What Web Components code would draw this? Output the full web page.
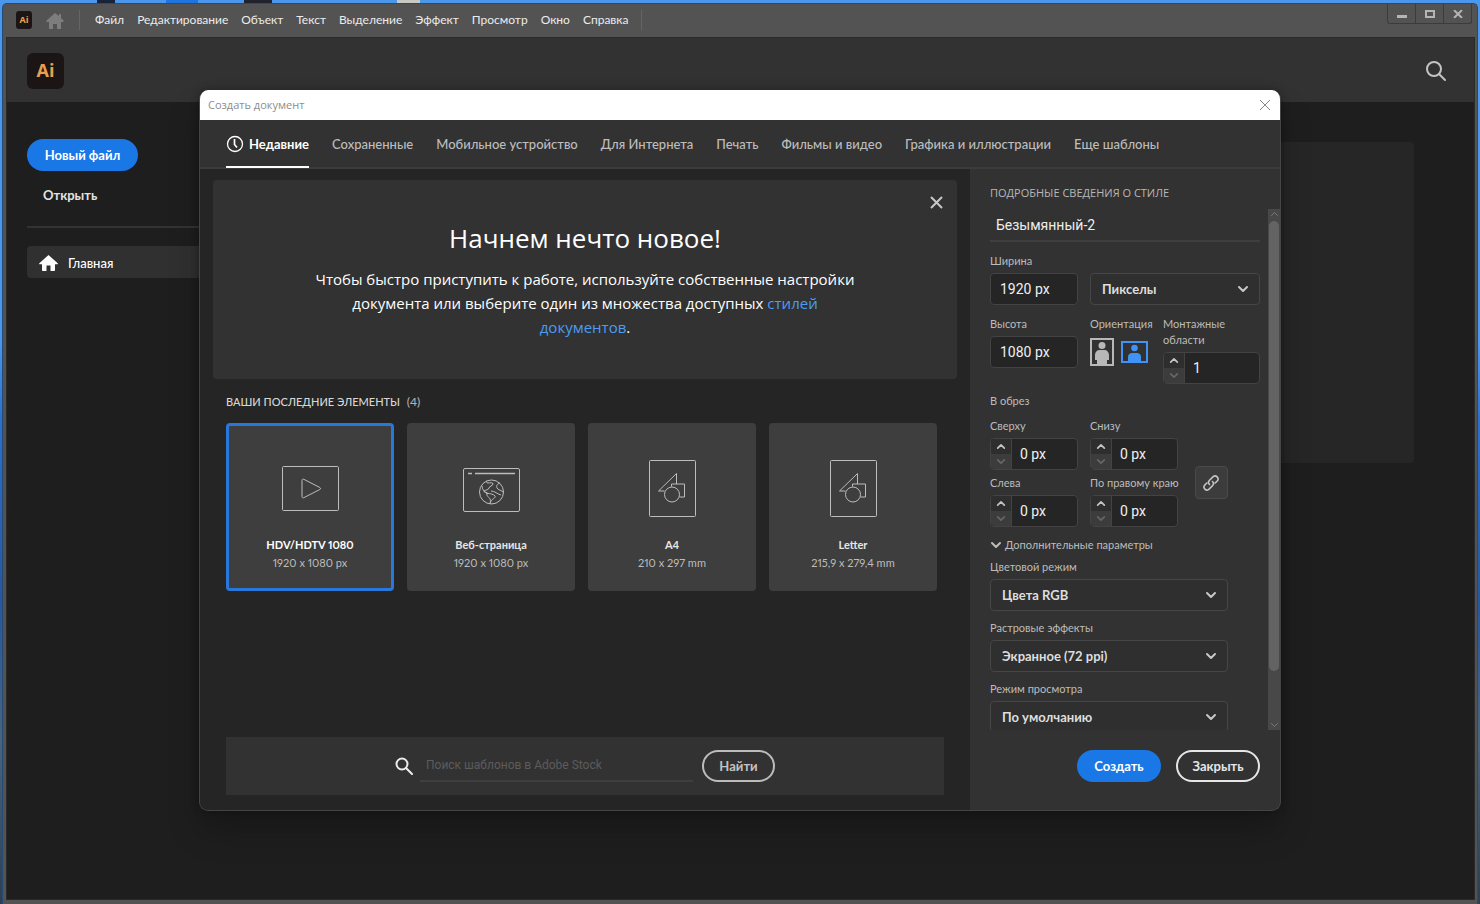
<!DOCTYPE html>
<html lang="ru">
<head>
<meta charset="utf-8">
<title>Создать документ</title>
<style>
html,body{margin:0;height:100%}
body{font-family:Lato,"Open Sans",sans-serif;font-size:13px;line-height:16px;color:#e3e3e3;background:#1e1e1e;overflow:hidden}
</style>
</head>
<body>
<ai-desktop>
  <ai-window>
    <ai-menubar slot="menu"></ai-menubar>
    <ai-home-header slot="header"></ai-home-header>
    <ai-home slot="body"></ai-home>
  </ai-window>
  <ai-dialog slot="dialog" heading="Создать документ">
    <ai-tabs slot="tabs"></ai-tabs>
    <ai-recent slot="main">
      <ai-banner slot="banner"></ai-banner>
      <ai-preset name="HDV/HDTV 1080" size="1920 x 1080 px" icon="video" selected></ai-preset>
      <ai-preset name="Веб-страница" size="1920 x 1080 px" icon="web"></ai-preset>
      <ai-preset name="A4" size="210 x 297 mm" icon="print"></ai-preset>
      <ai-preset name="Letter" size="215,9 x 279,4 mm" icon="print"></ai-preset>
      <ai-stock-search slot="search"></ai-stock-search>
    </ai-recent>
    <ai-details slot="details"></ai-details>
  </ai-dialog>
</ai-desktop>

<script>
const define = (name, html, after) => customElements.define(name, class extends HTMLElement {
  connectedCallback() {
    if (this.shadowRoot) return;
    const root = this.attachShadow({mode: 'open'});
    const t = document.createElement('template');
    t.innerHTML = `<style>:host,*{box-sizing:border-box}button,input,select{font:inherit;color:inherit;margin:0}button{border:0;background:none;padding:0}svg{display:block;flex:none}</style>` +
      (typeof html === 'function' ? html(this) : html);
    root.append(t.content.cloneNode(true));
    if (after) after(root, this);
  }
});
const chevron = (w, h, sw, up) => `<svg width="${w}" height="${h}" viewBox="0 0 12 8" fill="none" stroke="currentColor" stroke-width="${sw}" stroke-linecap="round" stroke-linejoin="round" aria-hidden="true"><path d="${up ? 'M2 6l4-4 4 4' : 'M2 2l4 4 4-4'}"/></svg>`;

/* ---------- desktop behind the window ---------- */
define('ai-desktop', `
<style>
:host{display:flex;flex-direction:column;height:100%;position:relative;overflow:hidden;background:#4a97ec;padding:3px 2px 0 2px;
 background-image:
  linear-gradient(90deg,transparent 97px,#16233a 97px 115px,transparent 115px 166px,#1f74e0 166px 198px,transparent 198px 244px,#20222e 244px 272px,transparent 272px 397px,#c9c9c4 397px 420px,transparent 420px),
  linear-gradient(#4a97ec 0 340px,#2c70cc 420px,#27579e 600px,#48647f 740px,#2d3f50 100%);
 background-size:100% 3px,100% 100%;background-repeat:no-repeat}
.layer{position:absolute;inset:0;display:flex;padding:90px 199px 93px}
</style>
<slot></slot>
<div class="layer"><slot name="dialog"></slot></div>`);

/* ---------- application window ---------- */
define('ai-window', `
<style>
:host{display:flex;flex-direction:column;flex:1;min-height:0;background:#535353;border:1px solid #274a72;border-bottom:0;border-radius:5px 5px 0 0;padding:0 2px 4px 3px}
.in{flex:1;min-height:0;display:flex;flex-direction:column;border:1px solid #2a2a2a;background:#1e1e1e}
</style>
<slot name="menu"></slot>
<div class="in"><slot name="header"></slot><slot name="body"></slot></div>`);

define('ai-menubar', `
<style>
:host{display:flex;height:33px;align-items:center;color:#ececec;font-size:12px;padding:0 0 1px 10px}
.logo{width:16px;height:18px;border-radius:3px;background:#1c1516;color:#f2a14b;font:700 9px/18px "Open Sans",sans-serif;text-align:center}
.home{color:#7d7d7d;margin:1px 15px 0 14px}
.sep{width:1px;height:20px;background:#656565}
nav{display:flex;gap:13px;margin:0 13px 0 15px}
.win{margin:0 3px 0 auto;align-self:flex-start;display:flex;border:1px solid #3c3c3c;border-top:0;border-radius:0 0 3px 3px;color:#b5b5b5}
.win button{width:27px;height:19px;display:grid;place-items:center}
.win button+button{border-left:1px solid #3c3c3c;width:28px}
</style>
<span class="logo">Ai</span>
<svg class="home" width="18" height="16" viewBox="0 0 18 16" fill="currentColor"><path d="M9 0L0 8l1 1h2v7h4v-5h4v5h4V9h2l1-1-3-3V1h-2v2z"/></svg>
<span class="sep"></span>
<nav><button>Файл</button><button>Редактирование</button><button>Объект</button><button>Текст</button><button>Выделение</button><button>Эффект</button><button>Просмотр</button><button>Окно</button><button>Справка</button></nav>
<span class="sep"></span>
<div class="win">
<button aria-label="Свернуть"><svg width="10" height="10"><path d="M0 6h10v3H0z" fill="currentColor"/></svg></button>
<button aria-label="Развернуть"><svg width="10" height="8"><path d="M1 1h8v6H1z" fill="none" stroke="currentColor" stroke-width="2"/></svg></button>
<button aria-label="Закрыть окно"><svg width="10" height="8"><path d="M1 0l8 8M9 0L1 8" stroke="currentColor" stroke-width="2"/></svg></button>
</div>`);

define('ai-home-header', `
<style>
:host{display:flex;height:64px;flex:none;align-items:center;justify-content:space-between;background:#323232;padding:1px 27px 0 20px}
.logo{width:37px;height:36px;border-radius:6px;background:#1c1516;color:#e9a04d;font:700 18px/34px "Open Sans",sans-serif;text-align:center}
button{color:#c4c4c4}
</style>
<span class="logo">Ai</span>
<button aria-label="Поиск"><svg width="22" height="22" viewBox="0 0 22 22" fill="none" stroke="currentColor" stroke-width="2" stroke-linecap="round"><circle cx="9" cy="9" r="7"/><path d="M14 14l6 6"/></svg></button>`);

define('ai-home', `
<style>
:host{display:flex;flex:1;justify-content:space-between;padding:37px 60px 0 20px}
.side{width:240px;display:flex;flex-direction:column;align-items:flex-start;font-weight:700}
.new{height:32px;padding:0 16px;border-radius:16px;background:#1a77e6;color:#fff;width:111px;white-space:nowrap;text-align:center}
.open{height:20px;margin:14px 0 21px;padding:0 16px}
hr{width:100%;border:0;height:2px;background:#333;margin:0 0 18px}
.home{width:100%;height:32px;border-radius:4px;background:#303030;display:flex;align-items:center;gap:10px;padding:2px 12px 0;color:#fff;font-weight:500;text-decoration:none}
.card{width:240px;height:321px;margin-top:3px;background:#262626;border-radius:4px}
</style>
<div class="side">
<button class="new">Новый файл</button>
<button class="open">Открыть</button>
<hr>
<a class="home" href="#home"><svg width="19" height="16" viewBox="0 0 19 16" fill="#fff"><path d="M9.500 0L.3 8.300c-.4.500 0 1 .500 1H3V15c0 .6.400 1 1 1h3.500v-5.500h4V16H15c.6 0 1-.4 1-1V9.300h2.200c.6 0 .9-.6.500-1z"/></svg>Главная</a>
</div>
<div class="card"></div>`);

/* ---------- dialog ---------- */
define('ai-dialog', el => `
<style>
:host{display:flex;flex:1;flex-direction:column;min-width:0;border:1px solid #454545;border-top:0;border-radius:9px;overflow:hidden;background:#323232;box-shadow:0 20px 32px rgba(0,0,0,.22),0 0 8px rgba(0,0,0,.3)}
header{height:30px;flex:none;background:#fff;color:#8d8d8d;display:flex;align-items:center;justify-content:space-between;padding:0 9px 0 8px;font-family:"Open Sans",sans-serif;font-size:11px}
header button{color:#8a8a8a}
.body{flex:1;display:flex;min-height:0}
</style>
<header><span>${el.getAttribute('heading')}</span><button aria-label="Закрыть"><svg width="12" height="12"><path d="M1 1l10 10M11 1L1 11" stroke="currentColor"/></svg></button></header>
<slot name="tabs"></slot>
<div class="body"><slot name="main"></slot><slot name="details"></slot></div>`);

define('ai-tabs', `
<style>
:host{display:flex;flex:none;height:49px;padding:0 26px;gap:23px;border-bottom:2px solid #3c3c3c;color:#bdbdbd;font-weight:500}
button{display:flex;align-items:center;gap:5px;height:48px;padding-top:2px;border-bottom:2px solid transparent;white-space:nowrap}
button[aria-selected=true]{color:#fff;font-weight:700;border-color:#fff}
</style>
${['Недавние','Сохраненные','Мобильное устройство','Для Интернета','Печать','Фильмы и видео','Графика и иллюстрации','Еще шаблоны'].map((t,i)=>`<button role="tab" aria-selected="${!i}">${i?'':'<svg width="18" height="18" viewBox="0 0 18 18" fill="none" stroke="#fff"><circle cx="9" cy="9" r="7.500" stroke-width="1.300"/><path d="M8.500 4v5.500l2.500 3" stroke-width="1.700"/></svg>'}${t}</button>`).join('')}`,
  (root, el) => el.setAttribute('role', 'tablist'));

define('ai-recent', `
<style>
:host{display:flex;flex:1;min-width:0;flex-direction:column;background:#252525;padding:11px 13px 15px}
h2{font-size:11px;line-height:16px;font-weight:500;margin:15px 13px 13px;color:#d6d6d6}
h2 span{color:#b0b0b0;margin-left:4px;font-size:12px}
.grid{display:grid;grid-template-columns:repeat(4,1fr);gap:13px;margin:0 20px 0 13px}
.search{margin:auto 13px 0}
</style>
<slot name="banner"></slot>
<h2>ВАШИ ПОСЛЕДНИЕ ЭЛЕМЕНТЫ <span>(4)</span></h2>
<div class="grid"><slot></slot></div>
<div class="search"><slot name="search"></slot></div>`);

define('ai-banner', `
<style>
:host{display:flex;flex-direction:column;align-items:center;position:relative;background:#323232;border-radius:4px;color:#fff;padding:41px 90px 40px;font-family:"Open Sans",sans-serif;text-align:center}
h1{font-size:26px;line-height:34px;font-weight:400;margin:0 0 12px}
p{font-size:15px;line-height:24px;font-weight:500;margin:0;max-width:544px}
a{color:#4b9cf5;text-decoration:none}
button{position:absolute;top:16px;right:14px;color:#c8c8c8}
</style>
<button aria-label="Скрыть"><svg width="13" height="13"><path d="M1 1l11 11M12 1L1 12" stroke="currentColor" stroke-width="2"/></svg></button>
<h1>Начнем нечто новое!</h1>
<p>Чтобы быстро приступить к работе, используйте собственные настройки документа или выберите один из множества доступных <a href="#presets">стилей документов</a>.</p>`);

const art = {
  video: '<rect x=".5" y="6.500" width="56" height="44" rx="1"/><path d="M20 20.500v16c0 1.200.8 1.700 1.800 1.200l16-8.200c1-.5 1-1.500 0-2L21.800 19.300c-1-.5-1.800 0-1.800 1.200z"/>',
  web: '<rect x=".5" y="8.500" width="56" height="43" rx="1.500"/><path d="M5 13.500h4M12 13.500h40" stroke-width="1.500"/><circle cx="28.500" cy="32" r="12"/><path d="M24 21c-1 0-1 2 1 2s5-1 5 1-4 2-4 4-4 2-5 3 2 1 4 3M19 26c0 3 2 6 5 7s7 1 8 3-3 3-4 5 0 2 0 3M24 33c-1 3 2 4 3 6s0 3 0 5M28 31c4 0 6 3 10 4M37 23c-3 1-4 3-3 5s4 2 6 4"/>',
  print: '<rect x="5.500" y=".5" width="46" height="56" rx="1"/><path d="M20.500 31H14.500l18-17.500V24M27.500 26.500V24h13v13h-5"/><circle cx="28" cy="34.500" r="7.500"/>'
};
define('ai-preset', el => `
<style>
:host{display:block;min-width:0}
button{width:100%;height:168px;background:#3e3e3e;border:3px solid #3e3e3e;border-radius:4px;display:flex;flex-direction:column;align-items:center;padding:34px 0 0;font-size:11px;line-height:18px;color:#bcbcbc;font-variant-numeric:proportional-nums}
:host([selected]) button{border-color:#2878dc}
svg{margin-bottom:19px}
b{color:#e6e6e6}
:host([selected]) b{color:#fff}
</style>
<button><svg width="57" height="57" viewBox="0 0 57 57" fill="none" stroke="#bdbdbd">${art[el.getAttribute('icon')]}</svg><b>${el.getAttribute('name')}</b><span>${el.getAttribute('size')}</span></button>`);

define('ai-stock-search', `
<style>
:host{display:flex;height:58px;align-items:center;justify-content:center;background:#323232}
input{width:273px;height:32px;border:0;border-bottom:2px solid #3f3f3f;background:none;padding:0 6px;margin:0 9px 0 7px;font:12px Roboto,sans-serif;outline:0}
input::placeholder{color:#5c5c5c;opacity:1}
button{height:32px;width:73px;border:2px solid #bcbcbc;border-radius:16px;font-weight:700;color:#c4c4c4}
</style>
<svg width="18" height="18" viewBox="0 0 18 18" fill="none" stroke="#ececec" stroke-width="2" stroke-linecap="round"><circle cx="7" cy="7" r="5.500"/><path d="M11 11l6 6"/></svg>
<input type="text" aria-label="Поиск шаблонов" placeholder="Поиск шаблонов в Adobe Stock">
<button>Найти</button>`);

/* ---------- form controls ---------- */
define('ai-text', el => `
<style>
:host{display:flex;flex-direction:column}
label{font-size:11px;line-height:16px;color:#bcbcbc;margin-bottom:4px}
input{width:100%;height:32px;background:#252525;border:1px solid #434343;border-radius:4px;padding:0 9px;font:14px Roboto,sans-serif;color:#f0f0f0;outline:0}
</style>
<label for="i">${el.getAttribute('label')}</label><input id="i" type="text" value="${el.getAttribute('value')}">`);

define('ai-select', el => `
<style>
:host{display:flex;flex-direction:column}
label{font-size:11px;line-height:16px;color:#bcbcbc;margin-bottom:4px}
.box{display:grid;align-items:center}
.box>*{grid-area:1/1}
.box svg{justify-self:end;margin-right:11px;pointer-events:none;color:#c8c8c8}
select{appearance:none;width:100%;height:32px;background:#2f2f2f;border:1px solid #464646;border-radius:4px;padding:0 11px;font-weight:700;color:#dedede;outline:0}
</style>
${el.hasAttribute('label') ? `<label for="s">${el.getAttribute('label')}</label>` : ''}
<div class="box"><select id="s" aria-label="${el.getAttribute('label') || 'Единицы'}"><option>${el.getAttribute('value')}</option></select>${chevron(12,8,2)}</div>`);

define('ai-stepper', el => `
<style>
:host{display:flex;flex-direction:column}
label{font-size:11px;line-height:16px;color:#bcbcbc;margin-bottom:4px;white-space:nowrap}
.box{display:flex;height:32px;border:1px solid #434343;border-radius:4px;overflow:hidden;background:#252525}
.btns{width:21px;flex:none;display:flex;flex-direction:column;border-right:1px solid #434343;background:#2e2e2e}
.btns button{flex:1;display:grid;place-items:center;color:#c4c4c4}
.btns button+button{background:#3c3c3c;color:#666}
input{flex:1;min-width:0;width:0;border:0;background:none;padding:0 8px;font:14px Roboto,sans-serif;color:#f0f0f0;outline:0}
</style>
<label for="n">${el.getAttribute('label')}</label>
<div class="box"><span class="btns"><button aria-label="Больше">${chevron(10,7,2,1)}</button><button aria-label="Меньше">${chevron(10,7,2)}</button></span><input id="n" type="text" value="${el.getAttribute('value')}"></div>`);

define('ai-orientation', `
<style>
:host{display:flex;flex-direction:column}
.l{font-size:11px;line-height:16px;color:#bcbcbc;margin-bottom:6px}
div{display:flex;align-items:center;gap:7px}
</style>
<span class="l">Ориентация</span>
<div>
<button aria-label="Книжная"><svg width="24" height="28" viewBox="0 0 24 28" fill="#b8b8b8"><path d="M1 1h22v26H1z" fill="none" stroke="#b8b8b8" stroke-width="2"/><circle cx="12" cy="7.500" r="3.500"/><path d="M5 17c0-3 2-5 4.500-5h5c2.500 0 4.500 2 4.500 5v5h-2v5H7v-5H5z"/></svg></button>
<button aria-label="Альбомная" aria-pressed="true"><svg width="27" height="22" viewBox="0 0 27 22" fill="#4093f4"><path d="M1 1h25v20H1z" fill="none" stroke="#4093f4" stroke-width="2"/><circle cx="13.500" cy="7" r="3.300"/><path d="M7 21v-5c0-2.500 2-4 4-4h5c2 0 4 1.500 4 4v5z"/></svg></button>
</div>`);

define('ai-scrollbar', `
<style>
:host{display:flex;flex-direction:column;align-items:center;width:12px;background:#484848;color:#8a8a8a;padding:2px 0}
i{display:block;width:10px;flex:0 0 87%;margin:4px 0 auto;border-radius:5px;background:#636363}
</style>${chevron(9,6,1,1)}<i></i>${chevron(9,6,1)}`);

define('ai-details', `
<style>
:host{display:flex;flex-direction:column;width:310px;flex:none;padding:16px 0 0 20px}
h2{font:400 11px/16px "Open Sans",sans-serif;color:#b8b8b8;margin:0 0 8px}
.view{display:flex;justify-content:space-between;flex:0 1 521px;min-height:0;overflow:hidden}
form{width:270px;display:flex;flex-direction:column}
.name{width:100%;height:33px;flex:none;border:0;border-bottom:2px solid #3f3f3f;background:none;padding:0 6px;font:14px Roboto,sans-serif;color:#ededed;outline:0}
.row{display:grid;grid-template-columns:88px 1fr;gap:12px;align-items:end;margin-top:11px}
.row3{display:grid;grid-template-columns:88px 61px 97px;gap:12px;align-items:start;margin-top:11px}
h3{font-size:11px;line-height:16px;font-weight:400;color:#bcbcbc;margin:9px 0}
.bleed{display:grid;grid-template-columns:88px 88px 32px;column-gap:12px;row-gap:5px}
.link{grid-area:1/3/3/4;place-self:center;width:33px;height:33px;margin:20px 0 0 10px;border:1px solid #4a4a4a;border-radius:4px;background:#3c3c3c;display:grid;place-items:center;color:#c4c4c4}
.more{display:flex;align-items:center;gap:3px;font-size:11px;line-height:16px;color:#bcbcbc;margin:10px 0 6px}
.wide{width:238px;display:flex;flex-direction:column;gap:9px}
footer{display:flex;justify-content:flex-end;gap:15px;padding:20px 20px 28px;margin-bottom:auto;font-weight:700}
footer button{height:32px;border-radius:17px;width:84px}
.ok{background:#1a77e6;color:#fff}
.no{border:2px solid #e6e6e6;color:#e6e6e6}
</style>
<h2>ПОДРОБНЫЕ СВЕДЕНИЯ О СТИЛЕ</h2>
<div class="view">
<form>
<input class="name" type="text" aria-label="Имя документа" value="Безымянный-2">
<div class="row"><ai-text label="Ширина" value="1920 px"></ai-text><ai-select value="Пикселы"></ai-select></div>
<div class="row3"><ai-text label="Высота" value="1080 px"></ai-text><ai-orientation></ai-orientation><ai-stepper label="Монтажные<br>области" value="1"></ai-stepper></div>
<h3>В обрез</h3>
<div class="bleed">
<ai-stepper label="Сверху" value="0 px"></ai-stepper><ai-stepper label="Снизу" value="0 px"></ai-stepper>
<ai-stepper label="Слева" value="0 px"></ai-stepper><ai-stepper label="По правому краю" value="0 px"></ai-stepper>
<button type="button" class="link" aria-label="Связать значения"><svg width="18" height="18" viewBox="0 0 18 18" fill="none" stroke="currentColor" stroke-width="1.600" stroke-linecap="round"><path d="M7.500 10.500a3 3 0 0 1 0-4.200l3.700-3.700a3 3 0 0 1 4.200 4.200l-2.200 2.200M10.500 7.500a3 3 0 0 1 0 4.200l-3.700 3.700a3 3 0 0 1-4.200-4.200L4.800 9"/></svg></button>
</div>
<button type="button" class="more">${chevron(12,8,2)}Дополнительные параметры</button>
<div class="wide">
<ai-select label="Цветовой режим" value="Цвета RGB"></ai-select>
<ai-select label="Растровые эффекты" value="Экранное (72 ppi)"></ai-select>
<ai-select label="Режим просмотра" value="По умолчанию"></ai-select>
</div>
</form>
<ai-scrollbar></ai-scrollbar>
</div>
<footer><button class="ok">Создать</button><button class="no">Закрыть</button></footer>`);
</script>
</body>
</html>
